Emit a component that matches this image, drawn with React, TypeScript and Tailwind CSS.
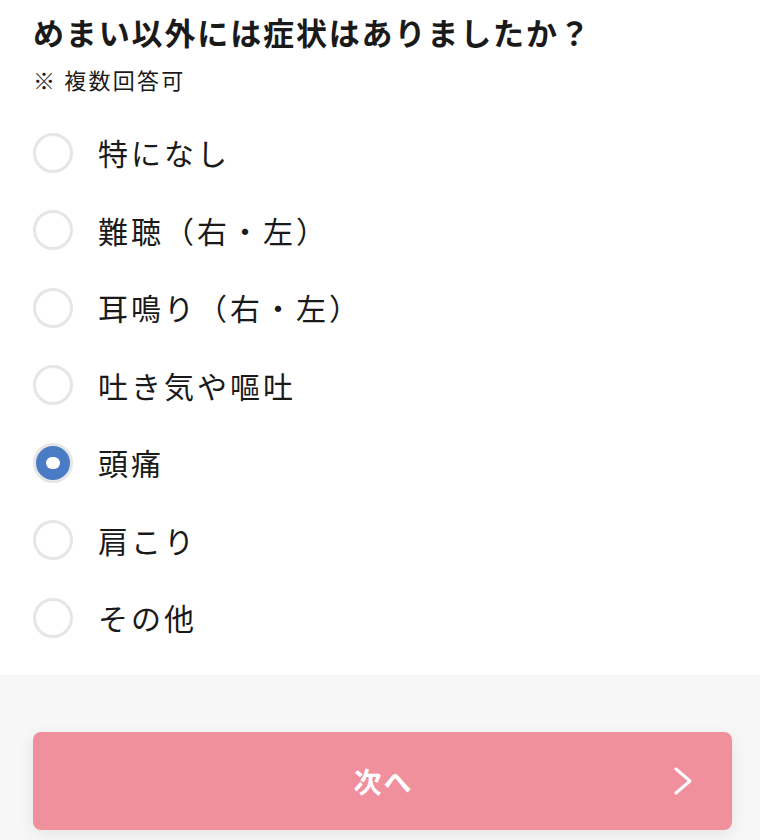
const options = [
  "特になし",
  "難聴（右・左）",
  "耳鳴り（右・左）",
  "吐き気や嘔吐",
  "頭痛",
  "肩こり",
  "その他",
];

const selected = "頭痛";

function Radio({ checked }: { checked: boolean }) {
  if (checked) {
    return (
      <span className="flex h-[40px] w-[40px] shrink-0 items-center justify-center rounded-full border-[3px] border-[#e6e6e6] bg-[#4a7bc5]">
        <span className="h-[12px] w-[14px] rounded-full bg-white" />
      </span>
    );
  }
  return <span className="h-[40px] w-[40px] shrink-0 rounded-full border-[3px] border-[#e6e6e6] bg-white" />;
}

export default function App() {
  return (
    <div className="min-h-[840px] w-[760px] bg-[#f7f7f7] font-['Noto_Sans_CJK_JP',sans-serif] text-[#1a1a1a]">
      <div className="bg-white pl-[33px] pr-[28px] pt-[12px] pb-[18px]">
        <h1 className="whitespace-nowrap text-[31px] font-bold leading-[40px] tracking-[0.06em]">めまい以外には症状はありましたか？</h1>
        <p className="mt-[12px] text-[22px] leading-[30px] tracking-[0.1em]">※ 複数回答可</p>

        <ul className="mt-[20px]">
          {options.map((opt) => (
            <li key={opt} className="flex h-[77.5px] items-center gap-[25px]">
              <Radio checked={opt === selected} />
              <span className="text-[30px] tracking-[0.1em]">{opt}</span>
            </li>
          ))}
        </ul>
      </div>

      <div className="pl-[33px] pr-[28px] pt-[57px]">
        <button className="relative flex h-[98px] w-full items-center justify-center rounded-[8px] bg-[#ef909c] shadow-[0_4px_16px_rgba(0,0,0,0.08)]">
          <span className="pl-[0.08em] text-[28px] font-bold tracking-[0.08em] text-white">次へ</span>
          <svg className="absolute right-[39px]" width="20" height="28" viewBox="0 0 20 28" fill="none">
            <polyline points="3,2 17,14 3,26" stroke="white" strokeWidth="3" strokeLinecap="round" strokeLinejoin="round" />
          </svg>
        </button>
      </div>
    </div>
  );
}
